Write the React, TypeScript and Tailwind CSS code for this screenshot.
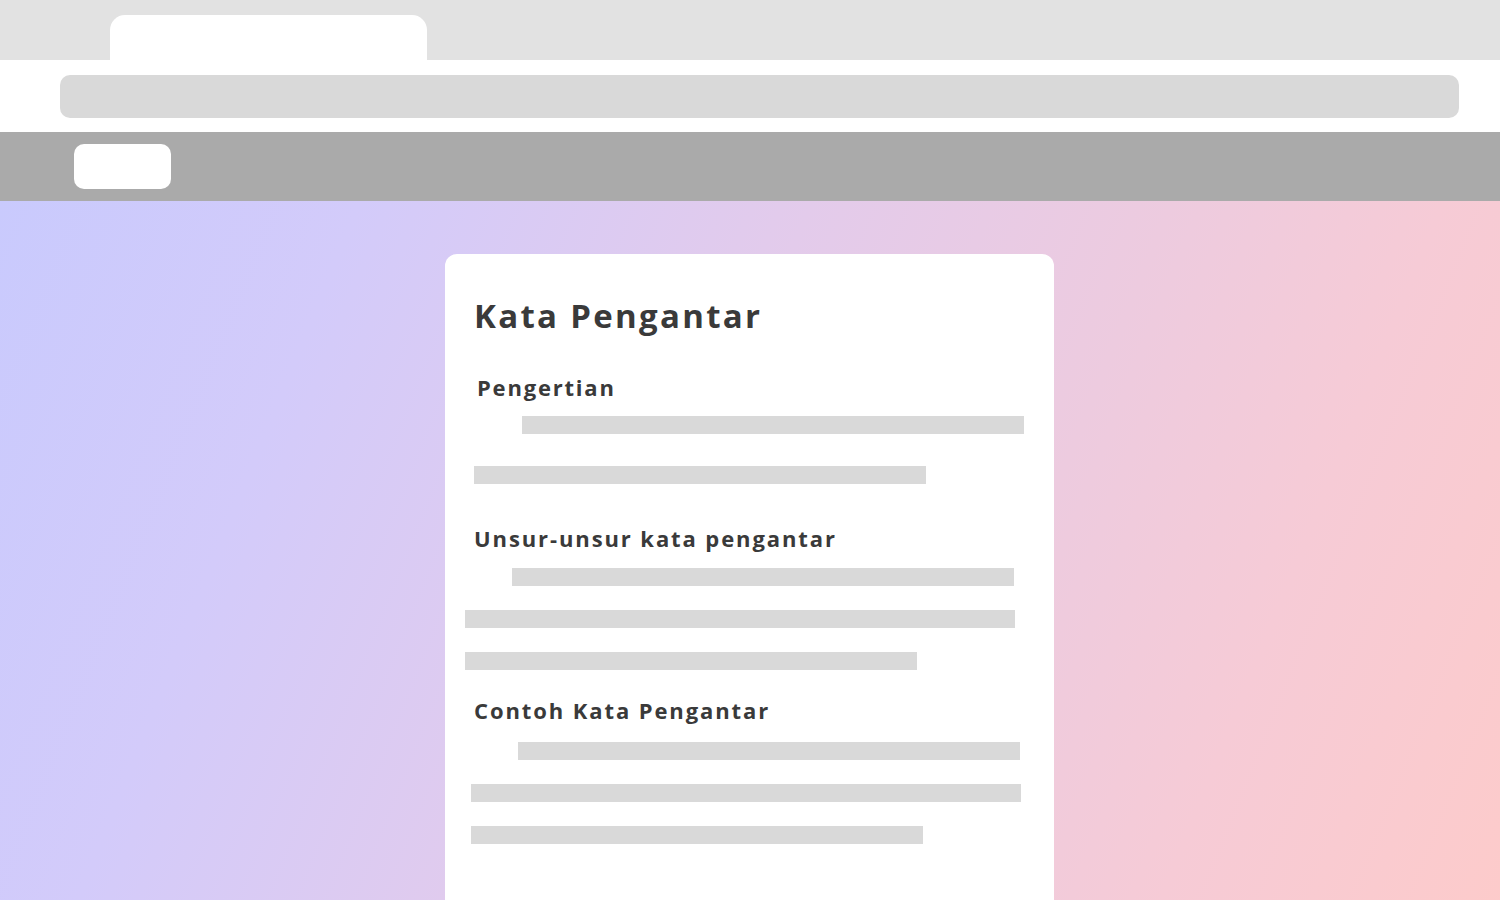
const bar = 'h-[18px] bg-[#d9d9d9]';

function Section({ title, gap, lines }: { title: string; gap: string; lines: { ml: string; w: string }[] }) {
  return (
    <div>
      <h2 className="text-[22px] leading-[28px] font-bold tracking-[1.9px] text-[#3a3a3a] pl-[29px]">{title}</h2>
      <div className={`flex flex-col gap-[24px] ${gap}`}>
        {lines.map((l, i) => (
          <div key={i} className={`${bar} ${l.ml} ${l.w}`} />
        ))}
      </div>
    </div>
  );
}

export default function App() {
  return (
    <div
      className="w-[1500px] h-[900px] overflow-hidden flex flex-col"
      style={{ fontFamily: '"Open Sans", "Noto Sans", sans-serif' }}
    >
      {/* Tab strip */}
      <div className="h-[60px] shrink-0 bg-[#e2e2e2] flex items-end pl-[110px]">
        <div className="w-[317px] h-[45px] bg-white rounded-t-[15px]" />
      </div>

      {/* Address bar */}
      <div className="h-[72px] shrink-0 bg-white flex items-center px-[60px] pr-[41px]">
        <div className="flex-1 h-[43px] bg-[#d9d9d9] rounded-[10px]" />
      </div>

      {/* Toolbar */}
      <div className="h-[69px] shrink-0 bg-[#aaaaaa] flex items-center pl-[74px]">
        <div className="w-[97px] h-[45px] bg-white rounded-[10px]" />
      </div>

      {/* Page */}
      <div className="flex-1 bg-[linear-gradient(112deg,#c9cafd_0%,#d3cbfa_20%,#e3cbeb_45%,#edcbdf_65%,#f6cbd6_80%,#fdcbca_100%)] flex justify-center pt-[53px] pr-[1px]">
        <div className="w-[609px] h-[700px] bg-white rounded-[12px] pt-[40px]">
          <h1 className="text-[33px] leading-[44px] font-bold tracking-[2.3px] text-[#3a3a3a] pl-[29px]">Kata Pengantar</h1>

          <div className="mt-[35px]">
            <h2 className="text-[22px] leading-[28px] font-bold tracking-[1.8px] text-[#3a3a3a] pl-[32px]">Pengertian</h2>
            <div className="flex flex-col gap-[32px] mt-[15px]">
              <div className={`${bar} ml-[77px] w-[502px]`} />
              <div className={`${bar} ml-[29px] w-[452px]`} />
            </div>
          </div>

          <div className="mt-[40px]">
            <Section
              title="Unsur-unsur kata pengantar"
              gap="mt-[16px]"
              lines={[
                { ml: 'ml-[67px]', w: 'w-[502px]' },
                { ml: 'ml-[20px]', w: 'w-[550px]' },
                { ml: 'ml-[20px]', w: 'w-[452px]' },
              ]}
            />
          </div>

          <div className="mt-[26px]">
            <Section
              title="Contoh Kata Pengantar"
              gap="mt-[18px]"
              lines={[
                { ml: 'ml-[73px]', w: 'w-[502px]' },
                { ml: 'ml-[26px]', w: 'w-[550px]' },
                { ml: 'ml-[26px]', w: 'w-[452px]' },
              ]}
            />
          </div>
        </div>
      </div>
    </div>
  );
}
